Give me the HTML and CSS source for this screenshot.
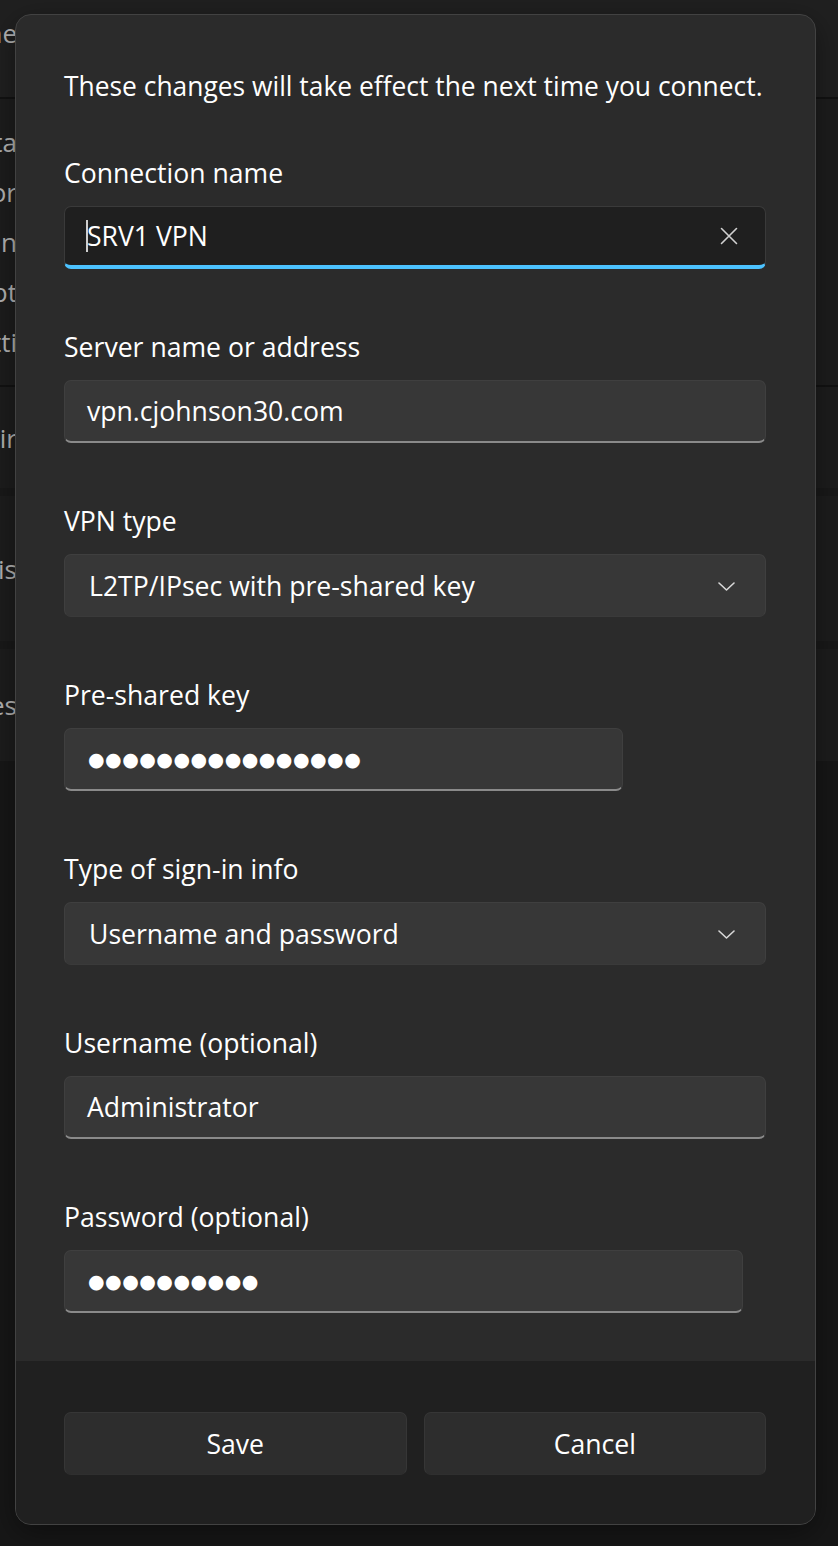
FILE: index.html
```html
<!DOCTYPE html>
<html lang="en">
<head>
<meta charset="utf-8">
<title>Edit VPN connection</title>
<link rel="stylesheet" href="styles.css">
</head>
<body>
<div class="page">
  <div class="bg-top"><div class="bg-row"><span class="clip"><span>The</span></span></div></div>
  <div class="bg-sep"></div>
  <div class="bg-card card1">
    <div class="bg-row"><span class="clip"><span>Data</span></span></div>
    <div class="bg-row"><span class="clip"><span>For</span></span></div>
    <div class="bg-row"><span class="clip"><span>Sin</span></span></div>
    <div class="bg-row"><span class="clip"><span>Opt</span></span></div>
    <div class="bg-row"><span class="clip"><span>Setti</span></span></div>
  </div>
  <div class="bg-sep"></div>
  <div class="bg-card card2"><div class="bg-row"><span class="clip"><span>Sir</span></span></div></div>
  <div class="bg-gap"></div>
  <div class="bg-card card3"><div class="bg-row"><span class="clip"><span>This</span></span></div></div>
  <div class="bg-gap"></div>
  <div class="bg-card card4"><div class="bg-row"><span class="clip"><span>Yes</span></span></div></div>
</div>

<div class="dialog" role="dialog">
  <div class="dialog-body">
    <p class="intro">These changes will take effect the next time you connect.</p>

    <div class="field first">
      <label class="label">Connection name</label>
      <div class="input focused">
        <span class="caret"></span><span class="value">SRV1 VPN</span>
        <svg class="clear" width="18" height="18" viewBox="0 0 18 18"><path d="M1.5 1.5 L16.5 16.5 M16.5 1.5 L1.5 16.5" stroke="#d0d0d0" stroke-width="1.6" fill="none" stroke-linecap="round"/></svg>
      </div>
    </div>

    <div class="field">
      <label class="label">Server name or address</label>
      <div class="input"><span class="value">vpn.cjohnson30.com</span></div>
    </div>

    <div class="field">
      <label class="label">VPN type</label>
      <div class="select"><span class="value">L2TP/IPsec with pre-shared key</span>
        <svg class="chev" width="17" height="9" viewBox="0 0 17 9"><path d="M1 1 L8.5 8 L16 1" stroke="#d8d8d8" stroke-width="1.6" fill="none" stroke-linecap="round" stroke-linejoin="round"/></svg>
      </div>
    </div>

    <div class="field">
      <label class="label">Pre-shared key</label>
      <div class="input short"><span class="dots">●●●●●●●●●●●●●●●●</span></div>
    </div>

    <div class="field">
      <label class="label">Type of sign-in info</label>
      <div class="select"><span class="value">Username and password</span>
        <svg class="chev" width="17" height="9" viewBox="0 0 17 9"><path d="M1 1 L8.5 8 L16 1" stroke="#d8d8d8" stroke-width="1.6" fill="none" stroke-linecap="round" stroke-linejoin="round"/></svg>
      </div>
    </div>

    <div class="field">
      <label class="label">Username (optional)</label>
      <div class="input"><span class="value">Administrator</span></div>
    </div>

    <div class="field">
      <label class="label">Password (optional)</label>
      <div class="input pw"><span class="dots">●●●●●●●●●●</span></div>
    </div>
  </div>
  <div class="dialog-footer">
    <button class="btn">Save</button>
    <button class="btn">Cancel</button>
  </div>
</div>
</body>
</html>
```

FILE: styles.css
```css
html, body {
  margin: 0;
  padding: 0;
}
body {
  background: #171717;
  font-family: "Open Sans", "Noto Sans", sans-serif;
  color: #ffffff;
  width: 838px;
  height: 1546px;
  overflow: hidden;
  position: relative;
}

/* background settings page */
.page {
  display: flex;
  flex-direction: column;
}
.bg-top {
  height: 97px;
  background: #202020;
  display: flex;
  flex-direction: column;
  padding-top: 8px;
  box-sizing: border-box;
}
.bg-sep {
  height: 2px;
  background: #121212;
}
.bg-gap {
  height: 8px;
  background: #191919;
}
.bg-card {
  background: #1d1d1d;
  display: flex;
  flex-direction: column;
  justify-content: center;
}
.card1 { height: 286px; }
.card2 { height: 101px; }
.card3 { height: 145px; }
.card4 { height: 112px; }
.bg-row {
  height: 50px;
  display: flex;
  align-items: center;
}
.clip {
  width: 17px;
  overflow: hidden;
  display: flex;
  justify-content: flex-end;
  color: #b4b4b4;
  font-size: 26px;
  white-space: nowrap;
}
.clip span { flex: none; }

/* dialog */
.dialog {
  position: absolute;
  left: 15px;
  top: 14px;
  width: 801px;
  box-sizing: border-box;
  border: 1px solid #424242;
  border-radius: 16px;
  overflow: hidden;
  background: #2b2b2b;
  box-shadow: 0 8px 30px rgba(0,0,0,0.4);
}
.dialog-body {
  padding: 53px 49px 48px 48px;
}
.intro {
  margin: 0;
  font-size: 26.4px;
  line-height: 36px;
  white-space: nowrap;
}
.field {
  display: flex;
  flex-direction: column;
  margin-top: 60px;
}
.field.first { margin-top: 51px; }
.label {
  font-size: 26.6px;
  line-height: 36px;
  margin-bottom: 15px;
}
.input, .select {
  height: 63px;
  box-sizing: border-box;
  border-radius: 7px;
  background: #373737;
  border: 1px solid #3f3f3f;
  border-bottom: 2px solid #8a8a8a;
  display: flex;
  align-items: center;
  padding: 0 22px 0 22px;
  font-size: 26.6px;
}
.select {
  border-bottom: 1px solid #3a3a3a;
  padding-left: 24px;
  justify-content: space-between;
}
.input.focused {
  background: #1f1f1f;
  border: 1px solid #3a3a3a;
  border-bottom: 4px solid #4cc2ff;
  padding-left: 21px;
}
.input.short { width: 559px; }
.input.pw { width: 679px; }
.value { flex: 1; white-space: nowrap; }
.caret {
  width: 2px;
  height: 32px;
  background: #cfcfcf;
  margin-right: -1px;
}
.clear { margin-right: 5px; }
.chev { margin-right: 8px; margin-top: 2px; }
.dots {
  font-family: "DejaVu Sans", sans-serif;
  font-size: 19px;
  letter-spacing: 0.5px;
  color: #ffffff;
  padding-left: 1px;
}

.dialog-footer {
  background: #202020;
  padding: 51px 49px 49px 48px;
  display: grid;
  grid-template-columns: 1fr 1fr;
  gap: 17px;
}
.btn {
  height: 63px;
  border-radius: 7px;
  background: #2d2d2d;
  border: 1px solid #363636;
  border-bottom-color: #2f2f2f;
  color: #ffffff;
  font-family: "Open Sans", "Noto Sans", sans-serif;
  font-size: 26.6px;
  padding: 0;
}
```
